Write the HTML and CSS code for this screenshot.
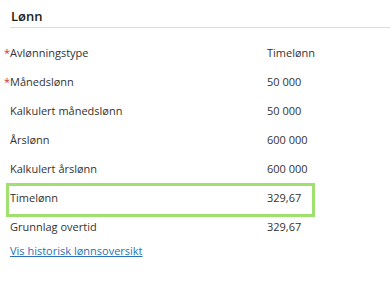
FILE: index.html
```html
<!DOCTYPE html>
<html lang="no">

<head>
    <meta charset="UTF-8">
    <meta name="viewport" content="width=device-width, initial-scale=1.0">
    <title>Lønn</title>
    <link rel="stylesheet" href="styles.css">
</head>

<body>
    <section class="panel">
        <h2 class="panel-title">Lønn</h2>
        <div class="rows">
            <div class="row"><span class="label required">Avlønningstype</span><span class="value">Timelønn</span></div>
            <div class="row"><span class="label required">Månedslønn</span><span class="value">50 000</span></div>
            <div class="row"><span class="label">Kalkulert månedslønn</span><span class="value">50 000</span></div>
            <div class="row"><span class="label">Årslønn</span><span class="value">600 000</span></div>
            <div class="row"><span class="label">Kalkulert årslønn</span><span class="value">600 000</span></div>
            <div class="row highlight"><span class="label">Timelønn</span><span class="value">329,67</span></div>
            <div class="row"><span class="label">Grunnlag overtid</span><span class="value">329,67</span></div>
        </div>
        <a class="history-link" href="#">Vis historisk lønnsoversikt</a>
    </section>
</body>

</html>
```

FILE: styles.css
```css
body {
    margin: 0;
    background: #fff;
    font-family: "Open Sans", "Liberation Sans", sans-serif;
    font-size: 11px;
    color: #333;
}

.panel {
    padding-left: 10px;
}

.panel-title {
    margin: 0;
    padding: 7px 0 2px 1px;
    font-size: 13px;
    line-height: 18px;
    font-weight: 600;
    color: #222;
    border-bottom: 1px solid #dcdcdc;
}

.rows {
    margin-top: 10px;
}

.row {
    display: grid;
    grid-template-columns: 257px 1fr;
    width: 309px;
    box-sizing: border-box;
    margin-left: -4px;
    padding-left: 4px;
    line-height: 29px;
}

.required::before {
    content: "*";
    color: #c8373b;
    margin-left: -6px;
}

.highlight {
    border: 3px solid #9fe070;
    padding-left: 1px;
    line-height: 24px;
    height: 34px;
    margin-bottom: -5px;
}

.history-link {
    display: inline-block;
    line-height: 19px;
    color: #2a72b5;
    text-decoration: underline;
}
```
